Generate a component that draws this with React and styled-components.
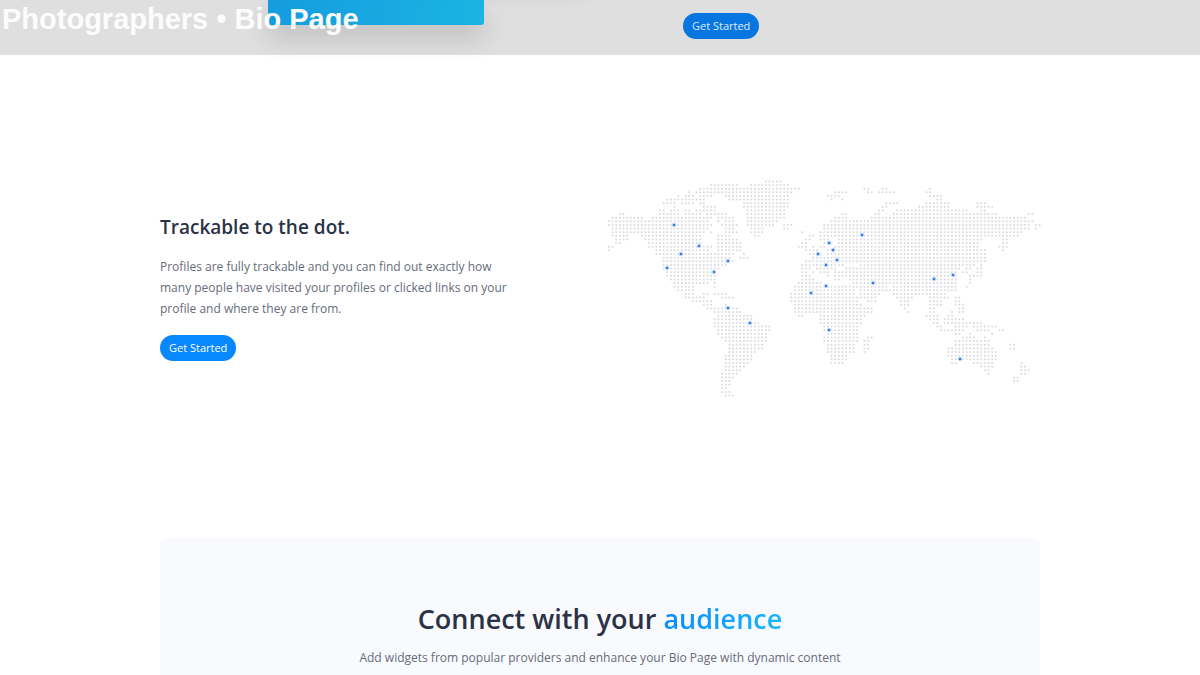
import React from "react";
import styled, { createGlobalStyle } from "styled-components";

const GlobalStyle = createGlobalStyle`
  *, *::before, *::after { box-sizing: border-box; }
  html { overflow: hidden; }
  body {
    margin: 0;
    background: #ffffff;
    color: #2b3245;
    font-family: "Open Sans", sans-serif;
  }
  h1, h2, p { margin: 0; }
`;

const Page = styled.div`
  position: relative;
  height: 100vh;
  overflow: hidden;
`;

const PageTitle = styled.h1`
  position: absolute;
  z-index: 2;
  top: 2px;
  left: 2px;
  font: bold 29px/34px "Liberation Sans", Arial, sans-serif;
  color: #fcfcfc;
  white-space: nowrap;
`;

const Container = styled.div`
  width: 100%;
  max-width: 880px;
  margin: 0 auto;
`;

const Banner = styled.section`
  background: #dfdfdf;
`;

const BannerRow = styled(Container)`
  display: grid;
  grid-template-columns: 1fr 357px;
  height: 55px;
`;

const CardSlot = styled.div`
  padding-left: 108px;
`;

const Card = styled.div`
  width: 216px;
  height: 25px;
  border-radius: 0 0 3px 3px;
  background: linear-gradient(100deg, #149cdf, #1bb4e2);
  box-shadow: 0 14px 26px rgba(0, 0, 0, 0.14), 100px -30px 14px rgba(90, 110, 170, 0.2);
`;

const BannerAction = styled.div`
  padding-top: 13px;
`;

const PillButton = styled.button`
  height: 26px;
  padding: 0 9px;
  border: 0;
  border-radius: 13px;
  background: ${({ $pressed }) => ($pressed ? "#0876e0" : "#0788ff")};
  color: ${({ $pressed }) => ($pressed ? "#dfeaf5" : "#ffffff")};
  font: 500 11px/26px "Open Sans", sans-serif;
  white-space: nowrap;
  cursor: pointer;
`;

const Feature = styled.section`
  padding: 125px 0 140px;
`;

const FeatureRow = styled(Container)`
  display: grid;
  grid-template-columns: 352px 434px;
  justify-content: space-between;
  align-items: center;
`;

const FeatureCopy = styled.div`
  padding-bottom: 4px;
`;

const FeatureTitle = styled.h2`
  margin-bottom: 16px;
  font-size: 19px;
  font-weight: 600;
  line-height: 26px;
`;

const Text = styled.p`
  font-size: 12px;
  font-weight: 400;
  line-height: 21px;
  color: #666c7a;
`;

const FeatureText = styled(Text)`
  margin-bottom: 16px;
`;

const Map = styled.svg`
  display: block;
  width: 100%;
  height: auto;
  overflow: visible;
`;

const Panel = styled(Container).attrs({ as: "section" })`
  padding: 61px 24px 80px;
  border-radius: 8px;
  background: #f8fafe;
  text-align: center;
`;

const PanelTitle = styled.h2`
  margin-bottom: 8px;
  font-size: 27px;
  font-weight: 600;
  line-height: 40px;
`;

const Accent = styled.span`
  background: linear-gradient(90deg, #0b8cff, #17b6f8);
  background-clip: text;
  color: transparent;
`;

/* Land cells of the world map: one entry per row, each a list of column runs. */
const LAND = [
  "43-47",
  "28-35 39-49",
  "25-38 36-52 70-71 75-76 88",
  "22 24-31 32-50 62-65 71-72 74-78 87-88",
  "19 21-23 25-28 32-49 60-63 88-91",
  "16-19 20-24 25-26 33-49 61 64 90-91",
  "15-18 20-23 25-26 37-49 76-79 87-93 101-103",
  "18 26-29 37-49 75-76 85-93 101-105",
  "14-15 17-19 21-22 24-29 38-48 74-75 79-98 102-103",
  "3-4 14-19 21-25 27-32 38-48 64-65 73-74 78-106 115-116",
  "1-9 12-16 17-28 30-34 38-48 62-65 72-114",
  "0-27 30 32-34 38-46 61-116",
  "0-28 31-35 38-45 48-50 59-115 117-118",
  "1-27 32-34 39-42 48-49 59-115 117",
  "1-26 28 32-35 39-42 53 58-60 61-113",
  "1-5 9-25 30-33 40-41 55-56 58-112",
  "2-5 10-25 30-35 54-55 58-60 63-102 108-109",
  "2-3 11-25 30-36 53-54 59 61 63-101 108-109",
  "0-1 11-28 30-36 52-54 56 58-59 62-101 107-109",
  "0 13-27 30-32 33-36 54-55 56-57 60-103 108",
  "13-28 29-34 37 55-58 60-103",
  "15-28 29-32 33 36-38 56-103",
  "15-34 54-103",
  "15-32 53-56 57-64 69-100 102",
  "15-30 53-55 57-62 65-96 98-99 101-102",
  "16-29 53-54 56 58-60 62-95 97-98 101-102",
  "16-29 53-55 60 62-95 99-102",
  "17-29 53-56 62-63 66-95 99",
  "18-27 29 52-58 67-95 99",
  "18-23 29 51-63 64-76 78-95 98",
  "19-23 51-67 69-95",
  "21-23 26-27 29-32 50-67 69-74 78-92",
  "21-26 31-34 50-68 69-73 79-83 88-93 95-96",
  "23-28 50-68 71-73 80-82 88-91 95-96",
  "26-28 32 51-69 80-82 88-91 95-97",
  "27-35 51-72 81 88-89 96-97",
  "29-36 51-72 82 88-89 94 96-97",
  "30-39 52-53 58-70 87-90 93-94",
  "29-39 58-69 88-90 92-95 96-97",
  "29-41 58-69 89-90 92-102",
  "29-44 59-68 90-91 95-98 100-106",
  "30-44 59-68 91-97 101-104 107-108",
  "30-43 60-68 95-96 99 105",
  "31-43 59-68 71-72 97-100 103",
  "32-43 59-68 70-71 95-100 101-104",
  "33-42 60-67 70-71 95-104 110-111",
  "33-42 60-67 70-71 93-105 110-111",
  "33-40 60-67 70 93-106",
  "32-39 61-65 93-106",
  "32-39 61-65 94-106",
  "32-38 61-64 94-95 100-105 113",
  "32-37 102-105 113-114",
  "32-36 103-104 113-115",
  "31-35 104 113-114",
  "31-34 111-112",
  "31-33 111-112",
  "31-33",
  "31-32",
  "31-33",
  "32-34",
];

const PINS = [
  [67, 45], [92, 66], [74, 74], [60, 88], [107, 92], [121, 81],
  [255, 55], [222, 63], [226, 70], [211, 74], [230, 80], [219, 85],
  [219, 106], [266, 103], [204, 113], [327, 99], [346, 95],
  [121, 128], [143, 143], [222, 150], [353, 179],
];

const landPath = LAND.map((runs, row) =>
  runs
    .split(" ")
    .map((run) => {
      const [from, to = from] = run.split("-").map(Number);
      let d = "";
      for (let col = from; col <= to; col += 1) {
        d += `M${(col * 3.65 + 1.9).toFixed(2)} ${(row * 3.63 + 1.4).toFixed(2)}h0`;
      }
      return d;
    })
    .join("")
).join("");

function WorldMap() {
  return (
    <Map viewBox="-1 0 434 218" role="img" aria-label="World map with visitor locations">
      <path d={landPath} fill="none" stroke="#d8d9dd" strokeWidth="2" strokeLinecap="round" />
      {PINS.map(([x, y]) => (
        <g key={`${x}-${y}`}>
          <circle cx={x} cy={y} r="2.4" fill="#cfe2fd" />
          <circle cx={x} cy={y} r="1.3" fill="#3b78dc" />
        </g>
      ))}
    </Map>
  );
}

export default function App() {
  return (
    <>
      <GlobalStyle />
      <Page>
        <PageTitle>Photographers • Bio Page</PageTitle>
        <Banner>
          <BannerRow>
            <CardSlot>
              <Card />
            </CardSlot>
            <BannerAction>
              <PillButton type="button" $pressed>Get Started</PillButton>
            </BannerAction>
          </BannerRow>
        </Banner>
        <Feature>
          <FeatureRow>
            <FeatureCopy>
              <FeatureTitle>Trackable to the dot.</FeatureTitle>
              <FeatureText>
                Profiles are fully trackable and you can find out exactly how many people have
                visited your profiles or clicked links on your profile and where they are from.
              </FeatureText>
              <PillButton type="button">Get Started</PillButton>
            </FeatureCopy>
            <WorldMap />
          </FeatureRow>
        </Feature>
        <Panel>
          <PanelTitle>
            Connect with your <Accent>audience</Accent>
          </PanelTitle>
          <Text>Add widgets from popular providers and enhance your Bio Page with dynamic content</Text>
        </Panel>
      </Page>
    </>
  );
}
